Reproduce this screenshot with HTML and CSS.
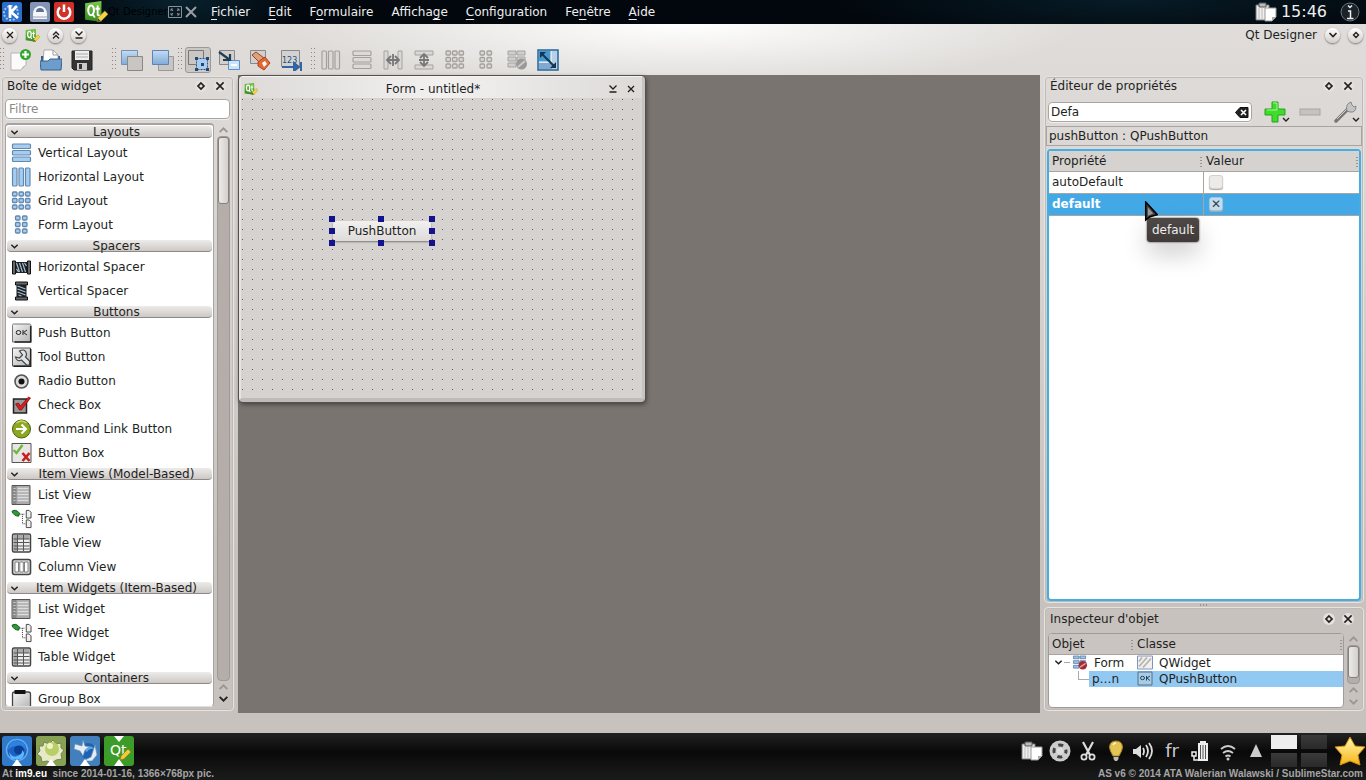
FILE: index.html
```html
<!DOCTYPE html>
<html lang="fr">

<head>
  <meta charset="UTF-8" />
  <meta name="viewport" content="width=device-width, initial-scale=1.0" />
  <title>Qt Designer</title>
  <link rel="stylesheet" href="styles.css">
</head>

<body>

  <!-- shared icons -->
  <svg class="defs" width="0" height="0" aria-hidden="true">
    <defs>
      <linearGradient id="blue" x1="0" y1="0" x2="0" y2="1"><stop offset="0" stop-color="#c3dcf3" /><stop offset="1" stop-color="#7fabd8" /></linearGradient>
      <linearGradient id="grey" x1="0" y1="0" x2="1" y2="1"><stop offset="0" stop-color="#f4f4f4" /><stop offset="1" stop-color="#b4b4b4" /></linearGradient>
      <linearGradient id="green" x1="0" y1="0" x2="0" y2="1"><stop offset="0" stop-color="#7cc84a" /><stop offset="1" stop-color="#2f8a1c" /></linearGradient>
      <linearGradient id="gold" x1="0" y1="0" x2="0" y2="1"><stop offset="0" stop-color="#fff9b0" /><stop offset="1" stop-color="#f5b414" /></linearGradient>
      <symbol id="qt" viewBox="0 0 22 22">
        <path d="M1 3 16 1v19L1 18z" fill="url(#green)" />
        <ellipse cx="6.500" cy="9.500" rx="2.600" ry="4.500" fill="none" stroke="#fff" stroke-width="1.900" />
        <path d="M7.500 12.500 10 16M12.500 5v8q0 1.500 2 1M10.500 8h4" fill="none" stroke="#fff" stroke-width="1.700" />
        <path d="m12 20 1-4 6-6 3 3-6 6z" fill="#f2d544" stroke="#a5852a" stroke-width=".6" /><path d="m12 20 1-3 2 2z" fill="#444" />
      </symbol>
      <symbol id="rows" viewBox="0 0 20 20"><g stroke-width="1.200" stroke="currentColor"><rect x="1" y="1" width="18" height="4.500" rx="1" /><rect x="1" y="7.500" width="18" height="4.500" rx="1" /><rect x="1" y="14" width="18" height="4.500" rx="1" /></g></symbol>
      <symbol id="cols" viewBox="0 0 20 20"><g stroke-width="1.200" stroke="currentColor"><rect x="1" y="1" width="4.500" height="18" rx="1" /><rect x="7.500" y="1" width="4.500" height="18" rx="1" /><rect x="14" y="1" width="4.500" height="18" rx="1" /></g></symbol>
      <symbol id="cells" viewBox="0 0 20 20"><g stroke-width="1.300" stroke="currentColor"><rect x="1" y="1" width="4.500" height="4" rx="1" /><rect x="7.500" y="1" width="4.500" height="4" rx="1" /><rect x="14" y="1" width="4.500" height="4" rx="1" /><rect x="1" y="7.500" width="4.500" height="4" rx="1" /><rect x="7.500" y="7.500" width="4.500" height="4" rx="1" /><rect x="14" y="7.500" width="4.500" height="4" rx="1" /><rect x="1" y="14" width="4.500" height="4" rx="1" /><rect x="7.500" y="14" width="4.500" height="4" rx="1" /><rect x="14" y="14" width="4.500" height="4" rx="1" /></g></symbol>
      <symbol id="pairs" viewBox="0 0 20 20"><g stroke-width="1.300" stroke="currentColor"><rect x="4" y="1" width="4.500" height="4" rx="1" /><rect x="11" y="1" width="4.500" height="4" rx="1" /><rect x="4" y="7.500" width="4.500" height="4" rx="1" /><rect x="11" y="7.500" width="4.500" height="4" rx="1" /><rect x="4" y="14" width="4.500" height="4" rx="1" /><rect x="11" y="14" width="4.500" height="4" rx="1" /></g></symbol>
      <symbol id="spring" viewBox="0 0 20 20"><path d="M1 4h3v13H1zM16 4h3v13h-3z" fill="#666" stroke="#111" /><path d="M4 5h12v11H4z" fill="#1b2026" /><path d="m5 6 3 9m0-9 3 9m0-9 3 9M5 12l2 3m6-9 2 3" stroke="#a9bfd0" stroke-width="1.200" /></symbol>
      <symbol id="vspring" viewBox="0 0 20 20"><path d="M4 1h12v3H4zM4 16h12v3H4z" fill="#666" stroke="#111" /><path d="M5 4h10v12H5z" fill="#1b2026" /><path d="m6 5 8 3m-8 0 8 3m-8 0 8 3M7 14l3 1" stroke="#a9bfd0" stroke-width="1.200" /></symbol>
      <symbol id="ok" viewBox="0 0 20 20"><path d="M2 1h16q1.500 0 1.500 1.500V19H1V2.500Q1 1 2 1z" fill="url(#grey)" stroke="#777" /><path d="M19.200 3v16H3" fill="none" stroke="#222" stroke-width="1.500" /><ellipse cx="7" cy="9.500" rx="2.300" ry="2" fill="none" stroke="#222" /><path d="M11.500 7v5M15.500 7l-3.500 2.500 3.500 2.500" fill="none" stroke="#222" /></symbol>
      <symbol id="tool" viewBox="0 0 20 20"><path d="M1 1h18v18H1z" fill="url(#grey)" stroke="#555" /><path d="M19.200 2v17.200H2" fill="none" stroke="#222" stroke-width="1.500" /><path d="M8 4q6-3 7 3 0 2-1 3l4 4v4h-3l-5-5q-5 2-6-3l4 1 3-3z" fill="#dfe4ea" stroke="#444" stroke-width="1.200" /></symbol>
      <symbol id="radio" viewBox="0 0 20 20"><circle cx="10" cy="10.500" r="6.500" fill="#ddd" stroke="#555" stroke-width="1.600" /><circle cx="10" cy="10.500" r="3" fill="#111" /></symbol>
      <symbol id="check" viewBox="0 0 20 20"><path d="M2 4h13v14H2z" fill="#999" stroke="#222" stroke-width="1.500" /><path d="m4 9 3-1 2 3 8-9 2 1L10 15H8z" fill="#d42020" stroke="#7a0c0c" stroke-width=".7" /></symbol>
      <symbol id="link" viewBox="0 0 20 20"><circle cx="10" cy="10" r="9" fill="#8ba820" stroke="#4c5d10" /><path d="M5 4q5-4 10 0" stroke="#c8da70" stroke-width="1.500" fill="none" /><path d="M4.500 10h10M10 5.500 14.500 10 10 14.500" fill="none" stroke="#fff" stroke-width="2" /></symbol>
      <symbol id="bbox" viewBox="0 0 20 20"><path d="M.5.5h19v19H.5z" fill="#e8e6e4" stroke="#555" /><path d="m2 7 3 3 6-8" stroke="#6cb83c" stroke-width="2.400" fill="none" /><path d="m11 10 7 8m0-8-7 8" stroke="#c8201c" stroke-width="2.600" /></symbol>
      <symbol id="list" viewBox="0 0 20 20"><path d="M.5.5h18v19H.5z" fill="#aaa" stroke="#555" /><path d="M1 1h4v18H1z" fill="#888" /><path d="M6 3.500h11M6 6.500h11M6 9.500h11M6 12.500h11M6 15.500h11" stroke="#ddd" stroke-width="1.300" /><path d="M2 3.500h2M2 6.500h2M2 9.500h2M2 12.500h2M2 15.500h2" stroke="#ccc" /></symbol>
      <symbol id="tree" viewBox="0 0 22 20"><path d="M1 2q4-3 8 2l-1 3Q3 7 1 2z" fill="#2f9a35" stroke="#14521a" /><path d="M9 5h6M12 5v10h3" fill="none" stroke="#333" stroke-dasharray="1 1" /><path d="M16 1h3l2 2v6h-5zM16 11h3l2 2v6h-5z" fill="#eee" stroke="#444" /></symbol>
      <symbol id="table" viewBox="0 0 20 20"><rect x="1" y="1" width="18" height="18" rx="1.500" fill="#eee" stroke="#444" stroke-width="1.500" /><path d="M2 2h16v4H2zM2 6h4v12H2z" fill="#aaa" /><path d="M2 6h16M2 9.500h16M2 13h16M2 16h16M6 2v16M12 2v16" stroke="#555" /></symbol>
      <symbol id="column" viewBox="0 0 20 20"><rect x="1" y="2.500" width="18" height="15" rx="2" fill="#ddd" stroke="#444" stroke-width="1.600" /><path d="M3.500 5h3.500v10H3.500zM8.300 5h3.500v10H8.300zM13 5h3.500v10H13z" fill="#fff" stroke="#666" stroke-width=".8" /></symbol>
      <symbol id="group" viewBox="0 0 20 20"><rect x="1" y="3" width="18" height="16" rx="2" fill="url(#grey)" stroke="#444" stroke-width="1.300" /><path d="M3 1h11v4H3z" fill="#111" /></symbol>
      <symbol id="chev" viewBox="0 0 10 10"><path d="m1.500 3 3.500 3.500L8.500 3" fill="none" stroke="currentColor" stroke-width="1.600" /></symbol>
      <symbol id="chev-up" viewBox="0 0 10 10"><path d="M1.500 7 5 3.500 8.500 7" fill="none" stroke="currentColor" stroke-width="1.600" /></symbol>
      <symbol id="x" viewBox="0 0 10 10"><path d="m2 2 6 6m0-6L2 8" stroke="currentColor" stroke-width="1.300" /></symbol>
      <symbol id="diamond" viewBox="0 0 10 10"><path d="m5 2.500 2.500 2.500L5 7.500 2.500 5z" fill="none" stroke="currentColor" stroke-width="1.400" /></symbol>
      <symbol id="shade" viewBox="0 0 10 10"><path d="m1.500 1.500 3.500 3.500 3.500-3.500M1.500 8h7" fill="none" stroke="currentColor" stroke-width="1.300" /></symbol>
      <symbol id="clip" viewBox="0 0 22 20"><path d="M1 3h13v15H1z" fill="#eee" stroke="#777" /><path d="M4 1h7v4H4z" fill="#bbb" stroke="#555" /><path d="M4 6v11M7 6v11" stroke="#bbb" /><path d="M10 6h11v9l-4 4h-7z" fill="#fff" stroke="#999" /><path d="m17 19 0-4h4z" fill="#aaa" /></symbol>
    </defs>
  </svg>

  <header class="topbar">
    <svg class="launcher" viewBox="0 0 20 20"><rect width="20" height="20" rx="2" fill="#2a6fc8" /><circle cx="9" cy="11" r="7" fill="none" stroke="#9cc4f0" stroke-width="2" stroke-dasharray="2 1.600" /><path d="M8 3v13M15 4l-6 6 7 6" fill="none" stroke="#fff" stroke-width="2.800" /></svg>
    <svg class="launcher" viewBox="0 0 20 20"><rect width="20" height="20" rx="2" fill="#8295b4" /><path d="M3 12a7 8 0 0 1 14 0v5H3z" fill="#f4f6f8" /><path d="M6 10a4 4 0 0 1 8 0z" fill="#5d7296" /><path d="M3 14h14v2H3z" fill="#c5ccd8" /></svg>
    <svg class="launcher" viewBox="0 0 20 20"><rect width="20" height="20" rx="2" fill="#cf3027" /><path d="M6 5.500a6.300 6.300 0 1 0 8 0M10 2.500V10" fill="none" stroke="#fff" stroke-width="2.500" /></svg>
    <svg class="app-icon"><use href="#qt" /></svg>
    <span class="ghost">Qt Designer</span>
    <svg class="restore" viewBox="0 0 14 12"><path d="M.5.500h13v11H.500zM3 3l2 2m6-2L9 5M3 9l2-2m6 2L9 7M3 5V3h2m4 0h2v2M3 7v2h2m4 0h2V7" fill="none" stroke="#8b9094" /></svg>
    <svg class="close" viewBox="0 0 12 12"><path d="m1 1 10 10M11 1 1 11" stroke="#9a9fa3" stroke-width="2" /></svg>
    <nav class="menu">
      <a href="#"><u>F</u>ichier</a>
      <a href="#"><u>E</u>dit</a>
      <a href="#">F<u>o</u>rmulaire</a>
      <a href="#">Afficha<u>g</u>e</a>
      <a href="#"><u>C</u>onfiguration</a>
      <a href="#">Fe<u>n</u>être</a>
      <a href="#"><u>A</u>ide</a>
    </nav>
    <svg class="top-clip"><use href="#clip" /></svg>
    <time class="clock">15:46</time>
    <svg class="info" viewBox="0 0 20 20"><circle cx="10" cy="10" r="9" fill="#1b2329" stroke="#6c757b" /><path d="M8 9h2.500v7M7 16.500h6.500M8 3.500l2 2 2-2" fill="none" stroke="#eee" stroke-width="1.500" /></svg>
  </header>

  <div class="window">
    <div class="titlebar">
      <button class="round" aria-label="Fermer"><svg><use href="#x" /></svg></button>
      <svg class="title-icon"><use href="#qt" /></svg>
      <button class="round" aria-label="Au-dessus"><svg viewBox="0 0 10 10"><path d="M2 5l3-3 3 3M2 8.500l3-3 3 3" fill="none" stroke="currentColor" stroke-width="1.300" /></svg></button>
      <button class="round" aria-label="Enrouler"><svg><use href="#shade" /></svg></button>
      <span class="app-title">Qt Designer</span>
      <button class="round" aria-label="Réduire"><svg><use href="#chev" /></svg></button>
      <button class="round" aria-label="Agrandir"><svg><use href="#diamond" /></svg></button>
    </div>

    <div class="toolbar">
      <i class="grip"></i>
      <button aria-label="Nouveau"><svg viewBox="0 0 22 22"><path d="M2 4h15v12l-5 5H2z" fill="#fbfbfb" stroke="#aaa" stroke-width=".8" /><path d="M12 21q1-4 5-5z" fill="#bbb" /><circle cx="16.500" cy="5.500" r="5.500" fill="#33a62c" /><path d="M16.500 2v7M13 5.500h7" stroke="#fff" stroke-width="2.200" /></svg></button>
      <button aria-label="Ouvrir"><svg viewBox="0 0 22 22"><path d="M1 7h19v8H1z" fill="#315f94" /><path d="M4 1h9l5 5v8H3z" fill="#fff" stroke="#999" stroke-width=".8" /><path d="M13 1v5h5" fill="none" stroke="#999" /><path d="M0 12h8l2-2h12l-1 11H1z" fill="#6d9dcc" stroke="#34628f" /></svg></button>
      <button aria-label="Enregistrer"><svg viewBox="0 0 22 22"><path d="M1 2h20v19H3l-2-2z" fill="#343434" stroke="#222" /><path d="M4 2h14v9H4z" fill="#eee" /><path d="M5 5h12M5 8h12" stroke="#aaa" /><path d="M6 14h10v7H6z" fill="#ccc" /><path d="M8 15h3v5H8z" fill="#333" /></svg></button>
      <i class="grip wide"></i>
      <button aria-label="Envoyer derrière"><svg viewBox="0 0 22 22"><path d="M.5 1.500h16v14H.5z" fill="url(#blue)" stroke="#7a91ad" /><path d="M6.500 7.500h15v14h-15z" fill="#c9c5c2" stroke="#888" /></svg></button>
      <button aria-label="Ramener devant"><svg viewBox="0 0 22 22"><path d="M6.500 7.500h15v14h-15z" fill="#c9c5c2" stroke="#999" /><path d="M.5 1.500h16v14H.5z" fill="url(#blue)" stroke="#6083b5" /></svg></button>
      <i class="grip near"></i>
      <button class="pressed" aria-label="Éditer les widgets"><svg viewBox="0 0 22 22"><path d="M1.500 1.500h15v14h-15z" fill="#c9c6c3" stroke="#777" /><path d="M9.500 9.500h11v11h-11z" fill="#a9cdf1" stroke="#36547a" stroke-dasharray="2 1" /><path d="M8 8h3v3H8zM19 8h3v3h-3zM8 19h3v3H8zM19 19h3v3h-3zM14 14h3v3h-3z" fill="#25466e" /></svg></button>
      <button aria-label="Éditer signaux"><svg viewBox="0 0 22 22"><path d="M1.500 1.500h15v14h-15z" fill="#d2cfcc" stroke="#888" /><path d="M10.500 11.500h11v9h-11z" fill="#cfe3f7" stroke="#5a8fd0" /><path d="M13 15h6v2h-6z" fill="#fff" /><path d="m1 3 11 8M12 5v6H5" fill="none" stroke="#213f55" stroke-width="2.200" /></svg></button>
      <button aria-label="Éditer les copains"><svg viewBox="0 0 22 22"><path d="M1.500 1.500h15v13h-15z" fill="#d2cfcc" stroke="#888" /><path d="m3 6 4-3 8 6-3 6z" fill="#e0a078" stroke="#93482a" /><path d="m9 13 7-5 5 6-6 7-6-4z" fill="#e36a35" stroke="#b33f19" /><path d="m13 14 3-2 2 3-3 3z" fill="#fff" /></svg></button>
      <button aria-label="Éditer l'ordre des onglets"><svg viewBox="0 0 22 22"><path d="M1.500 1.500h18v16h-18z" fill="#d2d2d3" stroke="#888" /><text x="2" y="14" font-size="8" fill="#274f7a">123</text><path d="M2 18h13M14 14l5 4-5 4zM21 13v9" stroke="#3265a2" stroke-width="2" fill="#3265a2" /></svg></button>
      <i class="grip last"></i>
      <button class="off" aria-label="Horizontalement" disabled><svg><use href="#cols" /></svg></button>
      <button class="off" aria-label="Verticalement" disabled><svg><use href="#rows" /></svg></button>
      <button class="off" aria-label="Séparateur horizontal" disabled><svg viewBox="0 0 20 20"><path d="M1 1h4v18H1zM15 1h4v18h-4z" fill="#dad7d4" stroke="#a5a3a1" /><path d="M4 10h12M8 6l-4 4 4 4M12 6l4 4-4 4M10 4v12" stroke="#777" stroke-width="1.800" fill="none" /></svg></button>
      <button class="off" aria-label="Séparateur vertical" disabled><svg viewBox="0 0 20 20"><path d="M1 1h18v4H1zM1 15h18v4H1z" fill="#dad7d4" stroke="#a5a3a1" /><path d="M10 4v12M6 8l4-4 4 4M6 12l4 4 4-4M5 10h10" stroke="#777" stroke-width="1.800" fill="none" /></svg></button>
      <button class="off" aria-label="Grille" disabled><svg><use href="#cells" /></svg></button>
      <button class="off" aria-label="Formulaire" disabled><svg><use href="#pairs" /></svg></button>
      <button class="off" aria-label="Casser la mise en page" disabled><svg viewBox="0 0 20 20"><path d="M1 1h8v4H1zM10 1h8v4h-8zM1 7h8v4H1zM10 7h8v4h-8zM1 13h8v4H1z" fill="#d0cdca" stroke="#a5a3a1" /><circle cx="14.500" cy="14" r="5.500" fill="#999" /><path d="m11 17 7-6" stroke="#ccc" stroke-width="2" /></svg></button>
      <button aria-label="Ajuster la taille"><svg viewBox="0 0 22 22"><path d="M1 1h20v20H1z" fill="#b9d0e4" stroke="#24659c" stroke-width="1.500" /><path d="M2 2h12v11H2z" fill="#4b97cf" /><path d="M14 2v11M2 13h12" stroke="#fff" /><path d="M2 14h13v6H2z" fill="#7fa9ce" /><path d="m5 5 12 12" stroke="#14374f" stroke-width="2" /><path d="M3 3h6L3 9zM19 19h-6l6-6z" fill="#14374f" /></svg></button>
    </div>

    <main class="workspace">
      <aside class="side left">
        <section class="dock">
          <div class="dock-title">
            <h2>Boîte de widget</h2>
            <button aria-label="Détacher"><svg><use href="#diamond" /></svg></button>
            <button aria-label="Fermer"><svg><use href="#x" /></svg></button>
          </div>
          <input class="field filter" type="text" placeholder="Filtre" aria-label="Filtre">
          <div class="widget-box">
            <div class="widget-list">
              <h3><svg><use href="#chev" /></svg>Layouts</h3>
              <ul class="blue">
                <li><svg><use href="#rows" /></svg>Vertical Layout</li>
                <li><svg><use href="#cols" /></svg>Horizontal Layout</li>
                <li><svg><use href="#cells" /></svg>Grid Layout</li>
                <li><svg><use href="#pairs" /></svg>Form Layout</li>
              </ul>
              <h3><svg><use href="#chev" /></svg>Spacers</h3>
              <ul>
                <li><svg><use href="#spring" /></svg>Horizontal Spacer</li>
                <li><svg><use href="#vspring" /></svg>Vertical Spacer</li>
              </ul>
              <h3><svg><use href="#chev" /></svg>Buttons</h3>
              <ul>
                <li><svg><use href="#ok" /></svg>Push Button</li>
                <li><svg><use href="#tool" /></svg>Tool Button</li>
                <li><svg><use href="#radio" /></svg>Radio Button</li>
                <li><svg><use href="#check" /></svg>Check Box</li>
                <li><svg><use href="#link" /></svg>Command Link Button</li>
                <li><svg><use href="#bbox" /></svg>Button Box</li>
              </ul>
              <h3><svg><use href="#chev" /></svg>Item Views (Model-Based)</h3>
              <ul>
                <li><svg><use href="#list" /></svg>List View</li>
                <li><svg><use href="#tree" /></svg>Tree View</li>
                <li><svg><use href="#table" /></svg>Table View</li>
                <li><svg><use href="#column" /></svg>Column View</li>
              </ul>
              <h3><svg><use href="#chev" /></svg>Item Widgets (Item-Based)</h3>
              <ul>
                <li><svg><use href="#list" /></svg>List Widget</li>
                <li><svg><use href="#tree" /></svg>Tree Widget</li>
                <li><svg><use href="#table" /></svg>Table Widget</li>
              </ul>
              <h3><svg><use href="#chev" /></svg>Containers</h3>
              <ul>
                <li><svg><use href="#group" /></svg>Group Box</li>
              </ul>
            </div>
            <div class="scrollbar">
              <svg class="faint"><use href="#chev-up" /></svg>
              <div class="track"><div class="thumb"></div></div>
              <svg class="faint"><use href="#chev-up" /></svg>
              <svg><use href="#chev" /></svg>
            </div>
          </div>
        </section>
      </aside>

      <div class="mdi">
        <div class="form-window">
          <div class="form-title">
            <svg><use href="#qt" /></svg>
            <span>Form - untitled*</span>
            <button aria-label="Enrouler"><svg><use href="#shade" /></svg></button>
            <button aria-label="Fermer"><svg><use href="#x" /></svg></button>
          </div>
          <div class="canvas">
            <div class="selection">
              <button class="push">PushButton</button>
              <i class="h tl"></i><i class="h tc"></i><i class="h tr"></i>
              <i class="h ml"></i><i class="h mr"></i>
              <i class="h bl"></i><i class="h bc"></i><i class="h br"></i>
            </div>
          </div>
        </div>
      </div>

      <aside class="side right">
        <section class="dock props">
          <div class="dock-title">
            <h2>Éditeur de propriétés</h2>
            <button aria-label="Détacher"><svg><use href="#diamond" /></svg></button>
            <button aria-label="Fermer"><svg><use href="#x" /></svg></button>
          </div>
          <div class="search-row">
            <div class="field search">
              <input type="text" value="Defa" aria-label="Filtre des propriétés">
              <button aria-label="Effacer"><svg viewBox="0 0 14 11"><path d="M5 .5h8v10H5l-4.500-5z" fill="#222" stroke="#111" /><path d="m6 3 5 5m0-5L6 8" stroke="#fff" stroke-width="1.600" /></svg></button>
            </div>
            <button class="act" aria-label="Ajouter"><svg viewBox="0 0 26 22"><path d="M8 1h6v7h7v6h-7v7H8v-7H1V8h7z" fill="#3fdc2c" stroke="#25a51b" /><path d="M9 2h4v7H3" fill="none" stroke="#a7f596" /><path d="m19 17 3 3 3-3" fill="none" stroke="#222" stroke-width="1.400" /></svg></button>
            <button class="act" aria-label="Supprimer"><svg viewBox="0 0 26 22"><rect x="3" y="8" width="20" height="6" fill="#c6c2bf" stroke="#aaa6a3" /></svg></button>
            <button class="act" aria-label="Configurer"><svg viewBox="0 0 26 22"><path d="M2 20 14 8" stroke="#777" stroke-width="3.500" stroke-linecap="round" /><path d="M3 18 14 7" stroke="#ccc" /><path d="M13 10q-2-7 4-9l1 3 2 2 2-1q0 7-6 6z" fill="#c4c4c4" stroke="#777" stroke-width=".8" /><path d="m19 17 3 3 3-3" fill="none" stroke="#222" stroke-width="1.400" /></svg></button>
          </div>
          <p class="object-name">pushButton : QPushButton</p>
          <div class="prop-view">
            <table class="prop-table">
              <thead>
                <tr><th>Propriété</th><th>Valeur</th></tr>
              </thead>
              <tbody>
                <tr>
                  <td><label for="auto">autoDefault</label></td>
                  <td><input type="checkbox" id="auto"></td>
                </tr>
                <tr class="selected">
                  <td><label for="def">default</label>
                    <svg class="cursor" viewBox="0 0 12 20"><path d="M1 1v17l4-3 7-2z" fill="#444" stroke="#000" stroke-width="1.500" /><path d="M3 6v8l5-2z" fill="#999" /></svg>
                    <span class="tooltip" role="tooltip">default</span>
                  </td>
                  <td><input type="checkbox" id="def" checked></td>
                </tr>
              </tbody>
            </table>
          </div>
        </section>

        <i class="splitter"></i>

        <section class="dock inspector">
          <div class="dock-title">
            <h2>Inspecteur d'objet</h2>
            <button aria-label="Détacher"><svg><use href="#diamond" /></svg></button>
            <button aria-label="Fermer"><svg><use href="#x" /></svg></button>
          </div>
          <div class="tree-box">
            <div class="tree-view">
              <table class="object-table">
                <thead>
                  <tr><th>Objet</th><th>Classe</th></tr>
                </thead>
                <tbody>
                  <tr>
                    <td><div class="cell"><svg class="arrow"><use href="#chev" /></svg><i class="dash"></i><svg class="icon" viewBox="0 0 16 16"><path d="M1 1h6v3H1zM8 1h6v3H8zM1 6h6v3H1zM8 6h6v3H8zM1 11h6v3H1z" fill="#9cc0e4" stroke="#4d7098" stroke-width=".7" /><circle cx="11" cy="11" r="4.500" fill="#a62a35" /><path d="m8 13 6-4" stroke="#dba0a5" stroke-width="1.500" /></svg>Form</div></td>
                    <td><div class="cell"><svg class="icon" viewBox="0 0 16 14"><path d="M.5.5h15v13H.5z" fill="#f2f0ee" stroke="#7a98bd" /><path d="m2 11 8-9M6 12l8-9M2 6l3-4" stroke="#b5b2af" stroke-width="1.800" /></svg>QWidget</div></td>
                  </tr>
                  <tr class="current">
                    <td><div class="cell child"><i class="elbow"></i><span>p…n</span></div></td>
                    <td><div class="cell"><svg class="icon" viewBox="0 0 16 15"><path d="M1 1h14v13H1z" fill="#a9cbe4" stroke="#51718a" /><ellipse cx="5.500" cy="7" rx="2" ry="1.700" fill="none" stroke="#24445c" /><path d="M9.500 5v4.500M13 5 10 7l3 2.500" fill="none" stroke="#24445c" /></svg>QPushButton</div></td>
                  </tr>
                </tbody>
              </table>
            </div>
            <div class="scrollbar">
              <svg class="faint"><use href="#chev-up" /></svg>
              <div class="track"><div class="thumb"></div></div>
              <svg class="faint"><use href="#chev-up" /></svg>
              <svg class="faint"><use href="#chev" /></svg>
            </div>
          </div>
        </section>
      </aside>
    </main>
    <div class="statusbar"></div>
  </div>

  <footer class="panel">
    <div class="taskbar">
      <button class="task" aria-label="Navigateur"><svg viewBox="0 0 30 30"><rect width="30" height="30" rx="3" fill="#3179c9" /><circle cx="15" cy="14" r="10.500" fill="#1a62c4" stroke="#64a9ec" stroke-width="1.500" /><path d="M6 14q0-9 9-9t9 9q-3-4-9-4t-9 4z" fill="#2b83e2" /><ellipse cx="17" cy="14" rx="5" ry="4.500" fill="#0c3f94" /><path d="M7 16q4 6 8 4 6-2 5-6 5 4-1 9H9z" fill="#5ab6ff" /><path d="m15 23 5 7H10z" fill="#fff" /></svg></button>
      <button class="task" aria-label="Éditeur"><svg viewBox="0 0 30 30"><rect width="30" height="30" rx="3" fill="#87a252" /><path d="m3 10 4 0 1-4 5 2 4-4 3 4 5-1 0 5 3 2-3 4 1 5-6 1-4 3-5-2-5 1-1-5-4-3 3-3z" fill="#e5e9c7" stroke="#78824f" /><circle cx="16" cy="13" r="7" fill="#b8cf65" /><circle cx="14" cy="10" r="3" fill="#eff5c2" /><path d="m15 23 5 7H10z" fill="#fff" /></svg></button>
      <button class="task" aria-label="Client de courrier"><svg viewBox="0 0 30 30"><rect width="30" height="30" rx="3" fill="#4180bd" /><circle cx="18" cy="15" r="8" fill="#1d63b4" /><path d="M12 13q6-6 13 0-6-1-8 3z" fill="#61a7e4" /><path d="m5 8 7 2 1-6 2 6 4 1-4 3-2 6-3-5-6-2zM25 9l2 10-5 6-9 0 8-4z" fill="#e5ecf2" stroke="#6a90b5" stroke-width=".7" /><path d="m15 23 5 7H10z" fill="#fff" /></svg></button>
      <button class="task" aria-label="Qt Designer"><svg viewBox="0 0 30 30"><rect width="30" height="30" rx="3" fill="#3d9b27" /><path d="M10 0h10l-5 6z" fill="#fff" /><text x="6" y="19" font-size="14" fill="#fff">Qt</text><path d="m16 24 1-4 7-7 3 3-7 7z" fill="#f2c936" stroke="#8a6c20" stroke-width=".6" /><path d="m15 23 5 7H10z" fill="#fff" /></svg></button>
      <div class="tray">
        <svg class="w22"><use href="#clip" /></svg>
        <svg class="w22" viewBox="0 0 22 22"><circle cx="11" cy="11" r="10.500" fill="#ccc" /><circle cx="11" cy="11" r="6" fill="none" stroke="#444" stroke-width="3" stroke-dasharray="5 4.425" stroke-dashoffset="2.500" /><circle cx="11" cy="11" r="3.500" fill="#ddd" /></svg>
        <svg class="w22" viewBox="0 0 22 20"><path d="m6 1 7 13M16 1 9 14" stroke="#ddd" stroke-width="2.200" /><circle cx="7" cy="16" r="2.600" fill="none" stroke="#ddd" stroke-width="1.800" /><circle cx="15" cy="16" r="2.600" fill="none" stroke="#ddd" stroke-width="1.800" /></svg>
        <svg class="w22" viewBox="0 0 22 22"><path d="M11 1q6 0 6.500 6 0 3-3.500 9H8Q4.500 10 4.500 7 5 1 11 1z" fill="#e3c455" stroke="#a78420" /><path d="M8.500 17h5v2l-1.500 2h-2l-1.500-2z" fill="#bbb" /><path d="M8 5q1-2 3-2" stroke="#fff6c0" stroke-width="1.500" fill="none" /></svg>
        <svg class="w22" viewBox="0 0 22 20"><path d="M0 8h3l5-4v13l-5-4H0z" fill="#ddd" /><path d="M10 7q2 3 0 7M13 4q4 6 0 12M16 2q6 8 0 16" fill="none" stroke="#ddd" stroke-width="1.800" /></svg>
        <span class="lang">fr</span>
        <svg class="w22" viewBox="0 0 22 22"><path d="M9 3h2V1h6v2h2v18H9z" fill="#eee" /><path d="M11.500 5v14M14 5v14M16.500 5v14" stroke="#555" /><path d="M3 12h4v4H3zM5 16v4h4" stroke="#eee" stroke-width="1.500" fill="none" /></svg>
        <svg class="w22" viewBox="0 0 22 20"><path d="M4 8q7-6 14 0M6 12q5-4 10 0M8.500 15.500q2.500-2 5 0" fill="none" stroke="#ccc" stroke-width="1.800" /><circle cx="11" cy="18" r="1.500" fill="#ccc" /></svg>
        <svg class="w22" viewBox="0 0 22 22"><path d="m11 4 6 13H5z" fill="#ccc" /></svg>
      </div>
      <div class="pager"><i class="on"></i><i></i><i></i><i></i></div>
      <svg class="star" viewBox="0 0 30 30"><path d="m15 1 5 9 10 1-7 8 2 10-10-4-10 4 2-10-7-8 10-1z" fill="url(#gold)" stroke="#d58b10" /></svg>
    </div>
    <div class="credits">
      <span>At <b>im9.eu</b>&nbsp; since 2014-01-16, 1366×768px pic.</span>
      <span>AS v6 © 2014 ATA Walerian Walawski / SublimeStar.com</span>
    </div>
  </footer>

</body>

</html>
```
FILE: styles.css
```css
* {
  box-sizing: border-box;
}

body {
  margin: 0;
  height: 100vh;
  display: flex;
  flex-direction: column;
  font-family: "DejaVu Sans", sans-serif;
  font-size: 12px;
  line-height: 16px;
  color: #221f1e;
  background: #111;
  overflow: hidden;
}

button {
  font: inherit;
  color: inherit;
  padding: 0;
  border: none;
  background: none;
}

h2,
h3,
p,
ul {
  margin: 0;
  padding: 0;
  font-size: 12px;
  font-weight: normal;
  list-style: none;
}

svg {
  display: block;
  flex: none;
}

.defs {
  position: absolute;
}

/* top panel */
.topbar {
  display: flex;
  align-items: center;
  height: 24px;
  flex: none;
  padding: 0 6px 0 2px;
  color: #eee;
  background: radial-gradient(ellipse 120px 50px at 180px 0, #08222e, transparent), radial-gradient(ellipse 300px 40px at 1130px 0, #071c27, transparent), #02070d;
}

.launcher {
  width: 20px;
  height: 20px;
  margin-right: 4px;
}

.launcher:first-child {
  margin-right: 8px;
}

.app-icon {
  width: 24px;
  height: 24px;
  margin-left: 6px;
}

.ghost {
  width: 60px;
  white-space: nowrap;
  font-size: 10px;
  color: #000;
}

.restore {
  width: 14px;
  height: 12px;
}

.close {
  width: 12px;
  height: 12px;
  margin-left: 3px;
}

.menu {
  display: flex;
  flex: 1;
  gap: 18px;
  margin-left: 14px;
}

.menu a {
  color: inherit;
  text-decoration: none;
}

.menu u {
  text-underline-offset: 3px;
}

.top-clip {
  width: 22px;
  height: 20px;
  margin-right: 4px;
}

.clock {
  font-size: 16px;
  margin-right: 13px;
}

.info {
  width: 20px;
  height: 20px;
}

/* application window */
.window {
  flex: 1;
  min-height: 0;
  display: flex;
  flex-direction: column;
  background: radial-gradient(ellipse 400px 64px at 50% 0, #fff, transparent), linear-gradient(#dfdcd9, #d8d4d1 30%, #c7c2be 75%);
}

.titlebar {
  display: flex;
  align-items: center;
  height: 22px;
  padding: 0 3px 0 2px;
}

.round {
  width: 15px;
  height: 15px;
  margin-right: 8px;
  border-radius: 50%;
  background: linear-gradient(#fff, #d2cecb);
  box-shadow: 0 1px 2px #777;
  display: flex;
  align-items: center;
  justify-content: center;
}

.round svg {
  width: 10px;
  height: 10px;
}

.round:last-child {
  margin-right: 0;
}

.title-icon {
  width: 15px;
  height: 15px;
  margin-right: 8px;
}

.app-title {
  flex: 1;
  text-align: right;
  margin-right: 8px;
}

.toolbar {
  display: flex;
  align-items: center;
  height: 29px;
  gap: 5px;
  padding-bottom: 1px;
}

.toolbar button {
  width: 26px;
  height: 26px;
  display: flex;
  align-items: center;
  justify-content: center;
  border: 1px solid transparent;
  border-radius: 3px;
}

.toolbar svg {
  width: 22px;
  height: 22px;
}

.toolbar .pressed {
  border-color: #999;
  background: #cbc7c4;
}

.toolbar .off {
  color: #a3a09e;
  fill: #dcd9d6;
}

.toolbar .off svg {
  width: 20px;
  height: 20px;
}

.grip {
  width: 5px;
  height: 24px;
  margin-right: -3px;
  background: conic-gradient(from 270deg at 1px 1px, #8c8783 90deg, transparent 0) 0 0 / 3px 4px;
}

.grip.wide {
  margin-left: 12px;
}

.grip.near {
  margin-left: -3px;
}

.grip.last {
  margin-left: 2px;
}

.workspace {
  flex: 1;
  min-height: 0;
  display: flex;
}

.statusbar {
  height: 20px;
}

/* docks */
.side {
  display: flex;
  flex-direction: column;
}

.left {
  width: 238px;
  padding: 1px 4px 2px 1px;
}

.right {
  width: 326px;
  padding: 1px 2px 2px 4px;
}

.dock {
  display: flex;
  flex-direction: column;
  flex: 1;
  min-height: 0;
  padding: 0 3px 3px 3px;
  border: 1px solid #e6e3e1;
  border-radius: 4px;
  box-shadow: inset 0 0 0 1px #bfbab6;
}

.dock-title {
  display: flex;
  align-items: center;
  height: 17px;
  flex: none;
  padding: 0 4px 0 2px;
  gap: 7px;
}

.dock-title h2 {
  flex: 1;
}

.dock-title button {
  width: 12px;
  height: 12px;
  border-radius: 50%;
  background: #e4e1df;
}

.dock-title svg {
  width: 12px;
  height: 12px;
}

.field {
  height: 20px;
  border: 1px solid #aaa5a1;
  border-radius: 4px;
  background: #fff;
  box-shadow: 0 1px 0 #eee;
}

.filter {
  flex: none;
  width: 100%;
  margin: 5px 0 4px;
  padding: 0 3px;
  font: inherit;
}

.filter::placeholder {
  color: #8c8987;
}

.widget-box {
  flex: 1;
  min-height: 0;
  display: flex;
}

.widget-list {
  flex: 1;
  overflow: hidden;
  border: 1px solid #a8a3a0;
  border-top-width: 2px;
  border-bottom-color: #ddd;
  border-radius: 4px;
  background: #fff;
}

.widget-list h3 {
  display: flex;
  align-items: center;
  justify-content: center;
  height: 12px;
  margin: 3px 1px;
  padding-left: 14px;
  border-radius: 4px;
  background: linear-gradient(#edebea, #ccc8c5);
  border-bottom: 1px solid #8e8986;
  position: relative;
}

.widget-list h3:first-child {
  margin-top: 1px;
}

.widget-list h3 svg {
  position: absolute;
  left: 3px;
  top: 2px;
  width: 9px;
  height: 9px;
}

.widget-list li {
  display: flex;
  align-items: center;
  gap: 6px;
  height: 24px;
  padding-left: 5px;
}

.widget-list li svg {
  width: 21px;
  height: 20px;
}

.blue svg {
  fill: #a5cdf2;
  color: #6388ae;
}

.scrollbar {
  width: 16px;
  display: flex;
  flex-direction: column;
  align-items: center;
  padding: 1px 0 2px 2px;
}

.scrollbar svg {
  width: 11px;
  height: 12px;
}

.scrollbar .faint {
  color: #9b9693;
}

.track {
  flex: 1;
  width: 13px;
  border: 1px solid #a09a97;
  border-radius: 4px;
  background: #b5adaa;
}

.thumb {
  width: 11px;
  height: 67px;
  border: 1px solid #85807d;
  border-radius: 3px;
  background: linear-gradient(90deg, #eceae8, #d2cfcc);
}

/* form area */
.mdi {
  flex: 1;
  min-width: 0;
  padding: 1px;
  background: #7a7471;
}

.form-window {
  width: 406px;
  border: 1px solid #eceae8;
  border-width: 1px 3px 4px 2px;
  border-color: #f4f3f2 #c8c4c1 #c0bbb8 #e7e4e2;
  border-radius: 4px;
  background: #d6d2cf;
  box-shadow: 0 0 0 1px #55504e, 1px 2px 5px #3b3735;
}

.form-title {
  display: flex;
  align-items: center;
  height: 21px;
  padding: 2px 6px 0 3px;
  gap: 8px;
  background: linear-gradient(90deg, #dddad8, #f2f1f0 50%, #dddad8);
}

.form-title span {
  flex: 1;
  text-align: center;
}

.form-title svg {
  width: 14px;
  height: 14px;
}

.form-title button svg {
  width: 10px;
  height: 10px;
}

.canvas {
  height: 300px;
  margin-right: 6px;
  padding: 118px 0 0 88px;
  background: conic-gradient(from 270deg at 1px 1px, #5f5b59 90deg, transparent 0) 1px 1px / 10px 10px;
}

.selection {
  position: relative;
  width: 106px;
  height: 30px;
  padding: 5px 4px;
}

.push {
  display: block;
  width: 100%;
  height: 20px;
  border-radius: 4px;
  background: linear-gradient(#f2f1f0, #dedbd9);
  box-shadow: 0 1px 2px #777;
}

/* resize handles */
.h {
  position: absolute;
  width: 6px;
  height: 6px;
  background: #14148a;
}

.tl, .tc, .tr { top: 0; }
.ml, .mr { top: 12px; }
.bl, .bc, .br { bottom: 0; }
.tl, .ml, .bl { left: 0; }
.tc, .bc { left: 49px; }
.tr, .mr, .br { right: 0; }

/* property editor */
.props {
  padding: 0 1px 1px 1px;
}

.props .dock-title {
  padding: 0 8px 0 4px;
}

.inspector .dock-title {
  padding-right: 6px;
}

.search-row {
  display: flex;
  align-items: center;
  height: 26px;
  margin: 5px 2px 1px;
  flex: none;
}

.search {
  display: flex;
  align-items: center;
  flex: 1;
  padding: 0 2px;
  margin-right: 12px;
}

.search input {
  flex: 1;
  min-width: 0;
  padding: 0;
  border: none;
  outline: none;
  background: none;
  font: inherit;
  color: inherit;
}

.search svg {
  width: 14px;
  height: 11px;
}

.act {
  margin-left: 7px;
}

.act:nth-child(2) {
  margin-left: 0;
}

.act:last-child {
  margin-left: 11px;
}

.act svg {
  width: 26px;
  height: 22px;
}

.object-name {
  height: 20px;
  flex: none;
  padding: 1px 2px;
  border: 1px solid #a9a4a0;
}

.prop-view {
  flex: 1;
  min-height: 0;
  margin: 3px 1px 0;
  border: 2px solid #43aee3;
  border-radius: 4px;
  background: #fff;
}

table {
  width: 100%;
  border-collapse: collapse;
  table-layout: fixed;
}

th {
  font-weight: normal;
  text-align: left;
  padding: 0 3px;
  height: 20px;
  background: #d5d2cf;
  border-bottom: 1px solid #a8a4a1;
}

th::after {
  content: "";
  float: right;
  width: 2px;
  height: 10px;
  margin: 4px -2px 0 0;
  background: repeating-linear-gradient(#99948f 0 1px, transparent 1px 3px);
}

.prop-table th:first-child {
  width: 154px;
}

.prop-table td {
  height: 22px;
  padding: 0 3px;
  border-bottom: 1px solid #a8a4a1;
  position: relative;
}

.prop-table td:first-child {
  border-right: 1px solid #a8a4a1;
}

.selected {
  background: #42a8e6;
}

.selected label {
  color: #fff;
  font-weight: bold;
}

.prop-table input {
  display: block;
  appearance: none;
  width: 14px;
  height: 14px;
  margin: 0 0 0 2px;
  border: 1px solid #d2cfcd;
  border-radius: 3px;
  background: #edebea;
  box-shadow: 0 1px 1px #aaa;
}

.prop-table input:checked {
  background: #c4dced;
  border-color: #9ec5df;
}

.prop-table input:checked::before {
  content: "✕";
  display: block;
  font-size: 12px;
  line-height: 12px;
  text-align: center;
  color: #32424d;
}

.cursor {
  position: absolute;
  left: 95px;
  top: 7px;
  width: 14px;
  height: 21px;
  z-index: 2;
}

.tooltip {
  position: absolute;
  left: 98px;
  top: 24px;
  z-index: 1;
  padding: 4px 5px;
  border-radius: 3px;
  color: #eee;
  background: linear-gradient(#4e4946, #403b39);
  box-shadow: 0 0 2px #222, 0 12px 24px rgba(0, 0, 0, 0.2);
}

.splitter {
  height: 4px;
  width: 8px;
  align-self: center;
  background: repeating-linear-gradient(90deg, #99948f 0 1px, transparent 1px 3px) 0 1px / 8px 2px no-repeat;
}

/* object inspector */
.inspector {
  flex: none;
  padding-bottom: 2px;
}

.inspector .dock-title {
  height: 21px;
}

.tree-box {
  display: flex;
  margin-top: 4px;
}

.tree-view {
  flex: 1;
  height: 75px;
  border: 1px solid #a09b98;
  border-radius: 4px;
  overflow: hidden;
  background: #fff;
}

.object-table th {
  background: #c9c4c0;
}

.object-table th:first-child {
  width: 85px;
}

.object-table td {
  padding: 0;
  height: 16px;
}

.cell {
  display: flex;
  align-items: center;
  height: 16px;
}

.cell .icon {
  width: 16px;
  height: 15px;
  margin-right: 6px;
}

.cell .arrow {
  width: 9px;
  height: 9px;
  margin-left: 5px;
}

.dash {
  width: 6px;
  margin: 0 2px 0 1px;
  border-top: 1px solid #aaa;
}

td + td .cell {
  padding-left: 3px;
}

.elbow {
  width: 11px;
  height: 9px;
  margin: 0 0 7px 29px;
  border: 1px solid #aaa;
  border-width: 0 0 1px 1px;
}

.child span {
  flex: 1;
  padding-left: 3px;
  background: #92c9f2;
}

.current td + td {
  background: #92c9f2;
}

.inspector .thumb {
  height: 32px;
}

.inspector .scrollbar {
  padding: 0 0 0 2px;
}

/* bottom panel */
.panel {
  flex: none;
  color: #c8c8c8;
  background: linear-gradient(#222, #090909 40%, #1a1c1b);
}

.taskbar {
  display: flex;
  align-items: center;
  height: 35px;
  gap: 4px;
  padding-left: 2px;
}

.task svg {
  width: 30px;
  height: 30px;
}

.tray {
  display: flex;
  align-items: center;
  gap: 6px;
  margin-left: auto;
}

.w22 {
  width: 22px;
  height: 22px;
}

.lang {
  width: 22px;
  text-align: center;
  font-size: 18px;
}

.pager {
  display: grid;
  grid-template-columns: 26px 26px;
  gap: 4px;
}

.pager i {
  height: 14px;
  background: linear-gradient(#3a3a3a, #2a2a2a);
}

.pager .on {
  background: #eee;
}

.star {
  width: 32px;
  height: 30px;
  margin-left: 3px;
}

.credits {
  display: flex;
  justify-content: space-between;
  height: 12px;
  padding: 0 3px 0 2px;
  font-family: "Liberation Sans", sans-serif;
  font-size: 10px;
  font-weight: bold;
  line-height: 12px;
  color: #a5a5a5;
}

.credits b {
  color: #fff;
}
```
